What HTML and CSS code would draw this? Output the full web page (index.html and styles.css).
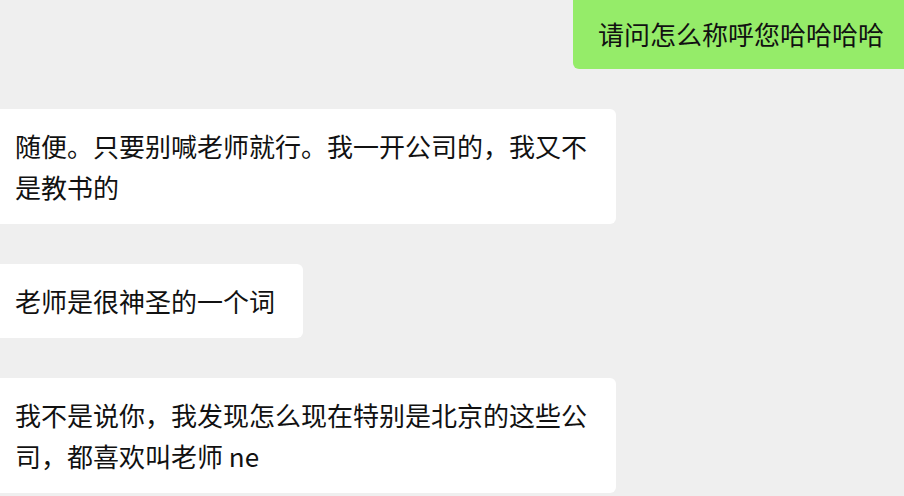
FILE: index.html
```html
<!DOCTYPE html>
<html>
<head>
    <title>聊天记录</title>
    <link rel="stylesheet" href="styles.css">
</head>
<body>
    <div class="chat">
        <div class="msg msg_me">请问怎么称呼您哈哈哈哈</div>
        <div class="msg msg_other">随便。只要别喊老师就行。我一开公司的，我又不是教书的</div>
        <div class="msg msg_other">老师是很神圣的一个词</div>
        <div class="msg msg_other">我不是说你，我发现怎么现在特别是北京的这些公司，都喜欢叫老师 ne</div>
    </div>
</body>
</html>
```

FILE: styles.css
```css
body {
    margin: 0;
    background-color: #efefef;
    font-family: "Noto Sans CJK SC", "Noto Sans", sans-serif;
    color: #111111;
}
.chat {
    display: flex;
    flex-direction: column;
    gap: 40px;
}
.msg {
    font-size: 26px;
    line-height: 41px;
    box-sizing: border-box;
}
.msg_me {
    align-self: flex-end;
    background-color: #95ec69;
    padding: 13px 20px 15px 25px;
    border-radius: 0 0 0 6px;
}
.msg_other {
    align-self: flex-start;
    background-color: #ffffff;
    max-width: 616px;
    padding: 16px 28px 17px 15px;
    border-radius: 0 6px 6px 0;
}
```
